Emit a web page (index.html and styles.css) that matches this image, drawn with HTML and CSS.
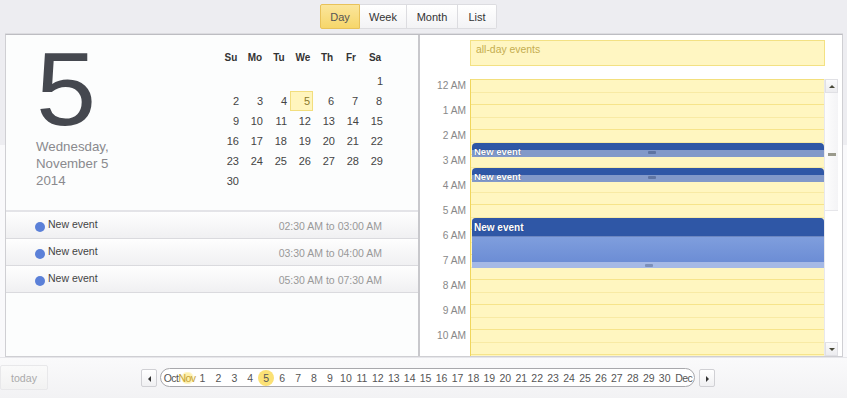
FILE: index.html
```html
<!DOCTYPE html>
<html lang="en">
<head>
    <meta charset="UTF-8">
    <meta name="viewport" content="width=device-width, initial-scale=1.0">
    <title>Day View</title>
    <link rel="stylesheet" href="styles.css">
</head>
<body>
    <div class="toolbar">
        <div class="view-switch">
            <button class="view-btn active">Day</button>
            <button class="view-btn week">Week</button>
            <button class="view-btn month">Month</button>
            <button class="view-btn list">List</button>
        </div>
    </div>

    <div class="panel">
        <div class="left-pane">
            <div class="day-head">
                <div class="big-date">
                    <div class="big-num">5</div>
                    <div class="long-date">Wednesday,<br>November 5<br>2014</div>
                </div>
                <div class="mini-cal">
                    <div class="mc-row mc-head">
                        <span>Su</span><span>Mo</span><span>Tu</span><span>We</span><span>Th</span><span>Fr</span><span>Sa</span>
                    </div>
                    <div class="mc-row">
                        <span></span><span></span><span></span><span></span><span></span><span></span><span>1</span>
                    </div>
                    <div class="mc-row">
                        <span>2</span><span>3</span><span>4</span><span class="sel">5</span><span>6</span><span>7</span><span>8</span>
                    </div>
                    <div class="mc-row">
                        <span>9</span><span>10</span><span>11</span><span>12</span><span>13</span><span>14</span><span>15</span>
                    </div>
                    <div class="mc-row">
                        <span>16</span><span>17</span><span>18</span><span>19</span><span>20</span><span>21</span><span>22</span>
                    </div>
                    <div class="mc-row">
                        <span>23</span><span>24</span><span>25</span><span>26</span><span>27</span><span>28</span><span>29</span>
                    </div>
                    <div class="mc-row">
                        <span>30</span><span></span><span></span><span></span><span></span><span></span><span></span>
                    </div>
                </div>
            </div>
            <ul class="event-list">
                <li class="event-item"><span class="ev-name"><i class="dot"></i>New event</span><span class="ev-time">02:30 AM to 03:00 AM</span></li>
                <li class="event-item"><span class="ev-name"><i class="dot"></i>New event</span><span class="ev-time">03:30 AM to 04:00 AM</span></li>
                <li class="event-item"><span class="ev-name"><i class="dot"></i>New event</span><span class="ev-time">05:30 AM to 07:30 AM</span></li>
            </ul>
        </div>

        <div class="right-pane">
            <div class="allday">all-day events</div>
            <div class="timeline">
                <div class="hour-labels">
                    <div class="hl">12 AM</div>
                    <div class="hl">1 AM</div>
                    <div class="hl">2 AM</div>
                    <div class="hl">3 AM</div>
                    <div class="hl">4 AM</div>
                    <div class="hl">5 AM</div>
                    <div class="hl">6 AM</div>
                    <div class="hl">7 AM</div>
                    <div class="hl">8 AM</div>
                    <div class="hl">9 AM</div>
                    <div class="hl">10 AM</div>
                </div>
                <div class="grid">
                    <div class="slot"></div><div class="slot"></div><div class="slot"></div><div class="slot"></div>
                    <div class="slot"></div><div class="slot"></div><div class="slot"></div><div class="slot"></div>
                    <div class="slot"></div><div class="slot"></div><div class="slot"></div><div class="slot"></div>

                    <div class="event short" style="top: 63px; height: 14px;">
                        <div class="ev-title">New event</div>
                        <div class="grip"></div>
                    </div>
                    <div class="event short" style="top: 88px; height: 14px;">
                        <div class="ev-title">New event</div>
                        <div class="grip"></div>
                    </div>
                    <div class="event long" style="top: 138px; height: 50px;">
                        <div class="ev-title">New event</div>
                        <div class="ev-body"></div>
                        <div class="ev-foot"><div class="grip"></div></div>
                    </div>
                </div>
                <div class="scrollbar">
                    <div class="sb-btn up"></div>
                    <div class="sb-thumb"><div class="sb-grip"></div></div>
                    <div class="sb-track"></div>
                    <div class="sb-btn down"></div>
                </div>
            </div>
        </div>
    </div>

    <div class="footer">
        <button class="today-btn">today</button>
        <div class="date-nav">
            <button class="nav-arrow prev"></button>
            <div class="date-strip">
                <span class="mon">Oct</span>
                <span class="mon cur">Nov</span>
                <span class="d">1</span><span class="d">2</span><span class="d">3</span><span class="d">4</span>
                <span class="d sel">5</span><span class="d">6</span><span class="d">7</span><span class="d">8</span>
                <span class="d">9</span><span class="d">10</span><span class="d">11</span><span class="d">12</span>
                <span class="d">13</span><span class="d">14</span><span class="d">15</span><span class="d">16</span>
                <span class="d">17</span><span class="d">18</span><span class="d">19</span><span class="d">20</span>
                <span class="d">21</span><span class="d">22</span><span class="d">23</span><span class="d">24</span>
                <span class="d">25</span><span class="d">26</span><span class="d">27</span><span class="d">28</span>
                <span class="d">29</span><span class="d">30</span>
                <span class="mon last">Dec</span>
            </div>
            <button class="nav-arrow next"></button>
        </div>
    </div>
</body>
</html>
```

FILE: styles.css
```css
body {
    margin: 0;
    width: 847px;
    height: 398px;
    overflow: hidden;
    font-family: "Liberation Sans", Arial, sans-serif;
    font-size: 11px;
    color: #444;
    background: linear-gradient(#ededf1 0, #ededf1 145px, #f9f9fb 145px);
}

/* top view switcher */
.toolbar {
    height: 34px;
    display: flex;
    justify-content: center;
    padding-right: 30px;
    box-sizing: border-box;
    padding-top: 4px;
}
.view-switch {
    display: flex;
    height: 25px;
}
.view-btn {
    font-family: inherit;
    font-size: 11px;
    color: #333;
    background: linear-gradient(#ffffff, #f3f3f5);
    border: 1px solid #dcdce0;
    border-left: none;
    padding: 0;
    margin: 0;
    height: 25px;
    cursor: pointer;
}
.view-btn.week { width: 47px; }
.view-btn.month { width: 51px; }
.view-btn.list {
    width: 39px;
    border-radius: 0 2px 2px 0;
}
.view-btn.active {
    background: linear-gradient(#fbe69c, #f6d66a);
    border: 1px solid #e8c25a;
    border-radius: 2px 0 0 2px;
    color: #555;
    width: 40px;
}

/* main panel */
.panel {
    margin-left: 5px;
    width: 838px;
    height: 323px;
    display: flex;
    background: #fff;
    border: 1px solid #cfcfd3;
    border-top-color: #bdbdc2;
    box-sizing: border-box;
    box-shadow: 0 -1px 0 #dcdce0;
}
.left-pane {
    width: 412px;
    border-right: 2px solid #c8c8cc;
    background: #fcfdfd;
}
.day-head {
    height: 175px;
    display: flex;
}
.big-date {
    width: 212px;
    padding-left: 30px;
    box-sizing: border-box;
}
.big-num {
    font-size: 103px;
    line-height: 96px;
    color: #45484f;
    margin-top: 7px;
    height: 96px;
    transform: scaleX(1.05);
    transform-origin: left;
}
.long-date {
    font-size: 13.3px;
    line-height: 17px;
    color: #8a8a8e;
}
.mini-cal {
    padding-top: 13px;
}
.mc-row {
    display: flex;
    height: 20px;
}
.mc-row span {
    width: 24px;
    text-align: right;
    padding-right: 3px;
    box-sizing: border-box;
    line-height: 20px;
    color: #444;
}
.mc-head {
    margin-bottom: 3px;
}
.mc-head span {
    text-align: center;
    padding-right: 0;
    padding-left: 2px;
    font-weight: bold;
    color: #333;
    font-size: 10px;
}
.mc-row span.sel {
    background: #fff5bd;
    border: 1px solid #f2de7e;
    line-height: 18px;
    padding-right: 2px;
    width: 23px;
    color: #8a7a2a;
}

/* event list */
.event-list {
    list-style: none;
    margin: 0;
    padding: 0;
    border-top: 2px solid #e4e4e8;
    font-size: 10.5px;
}
.event-item {
    height: 27px;
    box-sizing: border-box;
    border-bottom: 1px solid #dadade;
    background: linear-gradient(#fefefe, #f0f0f2);
    display: flex;
    justify-content: space-between;
    padding: 6px 36px 0 29px;
}
.ev-name {
    display: flex;
    color: #444;
}
.dot {
    width: 10px;
    height: 10px;
    border-radius: 50%;
    background: #5b80d8;
    margin: 4px 3px 0 0;
}
.ev-time {
    color: #999;
    padding-top: 2px;
}

/* right pane - day timeline */
.right-pane {
    flex: 1;
}
.allday {
    margin: 5px 0 0 50px;
    width: 355px;
    height: 26px;
    box-sizing: border-box;
    background: #fff6c2;
    border: 1px solid #f3e183;
    color: #c4ad4f;
    padding: 3px 5px;
    font-size: 10.4px;
}
.timeline {
    margin-top: 13px;
    height: 277px;
    display: flex;
    overflow: hidden;
}
.hour-labels {
    width: 50px;
}
.hl {
    height: 25px;
    text-align: right;
    padding-right: 4px;
    padding-top: 1px;
    box-sizing: border-box;
    color: #888;
    font-size: 10.2px;
    line-height: 12px;
}
.grid {
    position: relative;
    width: 354px;
    border-left: 1px solid #f0d65c;
    border-top: 1px solid #f3df7c;
    background: #fff6c0;
    box-sizing: border-box;
    align-self: flex-start;
}
.slot {
    height: 25px;
    box-sizing: border-box;
    border-bottom: 1px solid #f6e48a;
    background: linear-gradient(transparent 12px, #f8eaa4 12px, #f8eaa4 13px, transparent 13px);
}
.event {
    position: absolute;
    left: 1px;
    right: 0;
    border-radius: 4px 4px 0 0;
    overflow: hidden;
}
.event.short {
    background: linear-gradient(#2f57a6 0, #2f57a6 7px, #8299c9 7px);
}
.event .ev-title {
    color: #fff;
    font-weight: bold;
    font-size: 9.5px;
    padding-left: 2px;
    line-height: 12px;
    padding-top: 3px;
    text-shadow: 0 0 1px #1a3570;
}
.event.short .grip {
    position: absolute;
    left: 176px;
    bottom: 3px;
}
.grip {
    width: 8px;
    height: 3px;
    background: #5e74a2;
    border-radius: 1px;
}
.event.long {
    display: flex;
    flex-direction: column;
    background: #7c9bdb;
}
.event.long .ev-title {
    background: #2f57a6;
    height: 19px;
    box-sizing: border-box;
    padding-top: 4px;
    font-size: 10px;
    border-bottom: 1px solid #6c86c0;
}
.ev-body {
    flex: 1;
    background: linear-gradient(#7f9edd, #6c8dd5);
}
.ev-foot {
    height: 6px;
    background: #a5b9e6;
    display: flex;
    justify-content: center;
    align-items: center;
}
.ev-foot .grip {
    background: #7b8fba;
    margin-left: 2px;
}

/* fake scrollbar */
.scrollbar {
    width: 13px;
    display: flex;
    flex-direction: column;
    border-left: 1px solid #e8e8ec;
    background: #fff;
}
.sb-btn {
    height: 14px;
    background: linear-gradient(#fbfbfc, #ececef);
    border: 1px solid #e0e0e4;
    box-sizing: border-box;
    position: relative;
}
.sb-btn::after {
    content: "";
    position: absolute;
    left: 3px;
    top: 5px;
    border-left: 3px solid transparent;
    border-right: 3px solid transparent;
}
.sb-btn.up::after {
    border-bottom: 3px solid #4a4a3a;
}
.sb-btn.down::after {
    border-top: 3px solid #4a4a3a;
}
.sb-thumb {
    height: 118px;
    border-bottom: 1px solid #e6e6ea;
    background: linear-gradient(to right, #fdfdfd, #f4f4f6);
    display: flex;
    align-items: center;
    justify-content: center;
    padding-top: 6px;
    box-sizing: border-box;
}
.sb-grip {
    width: 8px;
    height: 3px;
    background: #9a9a8c;
}
.sb-track {
    flex: 1;
    background: #fff;
}

/* footer */
.footer {
    height: 41px;
    display: flex;
    align-items: flex-start;
    background: linear-gradient(#fafafb, #f2f2f4);
    border-top: 1px solid #e6e6ea;
    box-sizing: border-box;
    padding-top: 7px;
}
.today-btn {
    width: 48px;
    height: 25px;
    font-family: inherit;
    font-size: 10.6px;
    color: #aaa;
    background: linear-gradient(#fafafa, #f2f2f2);
    border: 1px solid #e8e8ea;
    border-radius: 2px;
    padding: 0;
}
.date-nav {
    display: flex;
    align-items: center;
    margin-left: 93px;
    margin-top: 3px;
}
.nav-arrow {
    width: 16px;
    height: 18px;
    background: linear-gradient(#ffffff, #f0f0f2);
    border: 1px solid #d0d0d4;
    border-radius: 2px;
    padding: 0;
    position: relative;
}
.nav-arrow::after {
    content: "";
    position: absolute;
    top: 6px;
    border-top: 3px solid transparent;
    border-bottom: 3px solid transparent;
}
.nav-arrow.prev::after {
    left: 6px;
    border-right: 3px solid #333;
}
.nav-arrow.next::after {
    left: 6px;
    border-left: 3px solid #333;
}
.date-strip {
    display: flex;
    align-items: center;
    height: 19px;
    width: 535px;
    box-sizing: border-box;
    margin: 0 4px 0 3px;
    border: 1.5px solid #a8a8ac;
    border-radius: 10px;
    background: #fff;
    padding-left: 1.5px;
    font-size: 10.5px;
    color: #555;
}
.date-strip .mon {
    width: 17px;
    text-align: center;
    letter-spacing: -0.6px;
    white-space: nowrap;
}
.date-strip .mon.cur {
    color: #c5a238;
    background: radial-gradient(circle, #fff0a8 45%, #fff7cc 60%, transparent 70%);
    width: 15px;
    display: flex;
    justify-content: center;
}
.date-strip .d {
    width: 15.95px;
    text-align: center;
}
.date-strip .d.sel {
    background: #fbe175;
    border-radius: 50%;
    height: 16px;
    line-height: 16px;
}
.date-strip .mon.last {
    width: 20px;
    margin-left: 1px;
}
```
